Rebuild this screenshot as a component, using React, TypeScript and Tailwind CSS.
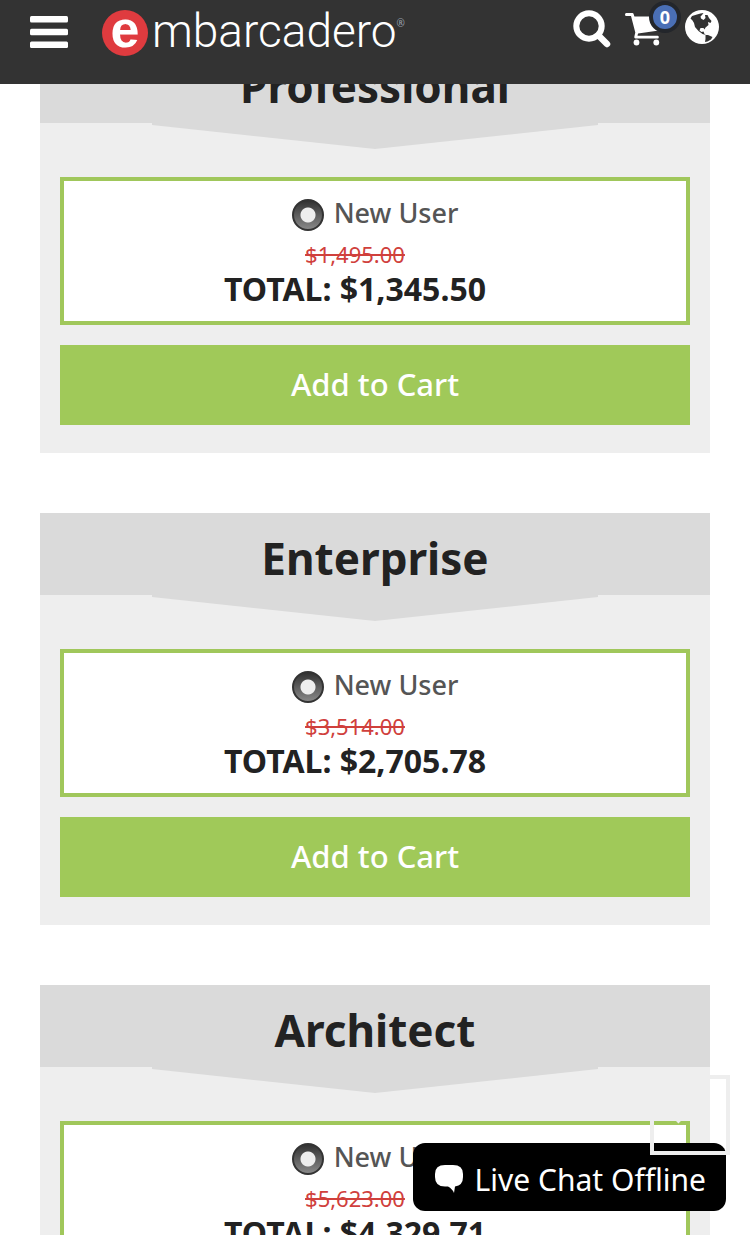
const editions = [
  { id: "professional", name: "Professional", listPrice: "$1,495.00", total: "$1,345.50" },
  { id: "enterprise", name: "Enterprise", listPrice: "$3,514.00", total: "$2,705.78" },
  { id: "architect", name: "Architect", listPrice: "$5,623.00", total: "$4,329.71" },
];

function MenuIcon() {
  return (
    <svg width="38" height="32" viewBox="0 0 38 32" fill="#fff" aria-hidden="true">
      <rect width="38" height="6.6" rx="1.5" />
      <rect y="12.7" width="38" height="6.6" rx="1.5" />
      <rect y="25.4" width="38" height="6.6" rx="1.5" />
    </svg>
  );
}

function SearchIcon() {
  return (
    <svg width="38" height="38" viewBox="0 0 38 38" fill="none" stroke="#fff" aria-hidden="true">
      <circle cx="16" cy="16" r="12.7" strokeWidth="6" />
      <path d="M26 26L34 34" strokeWidth="6.5" strokeLinecap="round" />
    </svg>
  );
}

function CartIcon() {
  return (
    <svg width="36" height="33" viewBox="0 0 36 33" fill="#fff" aria-hidden="true">
      <path d="M1.2 0H7.5Q8.3 0 8.6 1L9.4 3.5H34V17.5L13 20.5L12.5 22.8H32.5Q33.8 22.8 33.8 24.2T32.5 25.6H10.5Q9 25.6 9.3 23.8L10.3 19.5L6 3H1.2Q0 3 0 1.5T1.2 0Z" />
      <circle cx="11.5" cy="29.5" r="2.9" />
      <circle cx="31.3" cy="29.5" r="2.9" />
    </svg>
  );
}

function GlobeIcon() {
  return (
    <svg width="34" height="34" viewBox="0 0 34 34" aria-hidden="true">
      <circle cx="17" cy="17" r="17" fill="#fff" />
      <g fill="#333">
        <path d="M5.5 8.5L7 6L12 4.5L15.5 3.5L18.5 3L17 5L15.5 6.5L16 8.5L18.5 10L20.5 8L20 5L22.5 5L24 8L26.5 11L25.5 13L23 12L23.5 15L20.5 17.5L19.5 19.5L18.5 18L15.5 18L14.5 20.5L16.5 22L18.5 21.5L19.5 24L21 25L17.5 24L13.5 21L10 17L9 13L7.5 10.5Z" />
        <path d="M20.5 25L23 25L27.5 27L26 29.5L22.5 31.5L20 32L20.5 29Z" />
      </g>
    </svg>
  );
}

function ChatIcon() {
  return (
    <svg width="28" height="28" viewBox="0 0 28 28" fill="#fff" aria-hidden="true">
      <path d="M10 0H18Q28 0 28 9V12Q28 20.5 20 21.5L19 28Q17.5 24 13 21.5H10Q0 21.5 0 12V9Q0 0 10 0Z" />
    </svg>
  );
}

function Header() {
  return (
    <header className="fixed inset-x-0 top-0 z-10 flex h-21 items-start justify-between bg-[#333] pr-[31px] pl-[30px] text-white">
      <div className="flex items-start gap-[34px]">
        <button type="button" aria-label="Menu" className="mt-4">
          <MenuIcon />
        </button>
        <a href="#" className="mt-2.5 flex h-[46px] items-center" aria-label="Embarcadero">
          <span className="mr-1 flex size-[46px] items-center justify-center rounded-full bg-[#df3b3f] pb-2 font-['Liberation_Sans',sans-serif] text-[52px] leading-[46px] font-bold">
            e
          </span>
          <span className="pb-1 font-[Roboto,sans-serif] text-[46px] leading-[46px] font-light">mbarcadero</span>
          <span className="pb-5 text-[10px] leading-none text-gray-400">®</span>
        </a>
      </div>
      <div className="flex items-start pt-2.5">
        <button type="button" aria-label="Search" className="mr-3.5">
          <SearchIcon />
        </button>
        <a href="#cart" aria-label="Cart" className="relative mt-[3px] mr-6">
          <CartIcon />
          <span className="absolute -top-3 -right-5 flex size-8 items-center justify-center rounded-full border-4 border-[#23262b] bg-[#4a6fb5] text-lg leading-none font-bold">
            0
          </span>
        </a>
        <button type="button" aria-label="Language">
          <GlobeIcon />
        </button>
      </div>
    </header>
  );
}

type Edition = (typeof editions)[number];

function EditionCard({ edition }: { edition: Edition }) {
  return (
    <section className="bg-[#eee] pb-7">
      <h2 className="bg-[#dadada] pt-2 text-center text-[44px] leading-[74px] font-bold">{edition.name}</h2>
      <svg viewBox="0 0 670 26" preserveAspectRatio="none" className="block h-[26px] w-full" aria-hidden="true">
        <path d="M112 0H558V2L335 26L112 2Z" fill="#dadada" />
      </svg>
      <div className="px-5 pt-7">
        <div className="border-4 border-[#a0c75b] bg-white pt-3.5 pb-4 text-center">
          <label className="flex items-center justify-center gap-2.5 text-[27px] leading-9 font-medium text-[#555]">
            <input
              type="radio"
              name={edition.id}
              defaultChecked
              className="size-8 appearance-none rounded-full border-2 border-[#333] bg-[radial-gradient(circle,#eee_7px,transparent_8px),linear-gradient(#333,#888)]"
            />
            <span className="pb-1">New User</span>
          </label>
          <div className="pr-10">
            <del className="block text-[22px] leading-[38px] text-[#d0403c]">{edition.listPrice}</del>
            <strong className="block text-[32px] leading-8 font-bold">TOTAL: {edition.total}</strong>
          </div>
        </div>
        <button type="button" className="mt-5 h-20 w-full bg-[#a0c959] pb-0.5 text-[31px] font-medium text-white">
          Add to Cart
        </button>
      </div>
    </section>
  );
}

export default function App() {
  return (
    <div className="h-screen overflow-hidden bg-white font-['Noto_Sans',sans-serif] text-[#222]">
      <Header />
      <main className="flex flex-col gap-15 px-10 pt-[41px]">
        {editions.map((edition) => (
          <EditionCard key={edition.id} edition={edition} />
        ))}
      </main>
      <button
        type="button"
        className="fixed right-6 bottom-6 flex h-17 items-center gap-3 rounded-xl bg-black pt-1 pr-5 pl-[22px] text-[30px] text-white"
      >
        <ChatIcon />
        Live Chat Offline
      </button>
      <button
        type="button"
        aria-label="Back to top"
        className="fixed right-5 bottom-20 flex size-20 items-center justify-center border-4 border-[#eee]"
      >
        <svg width="30" height="18" viewBox="0 0 30 18" fill="none" stroke="#eee" strokeWidth="4" aria-hidden="true">
          <path d="M2 16L15 3L28 16" />
        </svg>
      </button>
    </div>
  );
}
